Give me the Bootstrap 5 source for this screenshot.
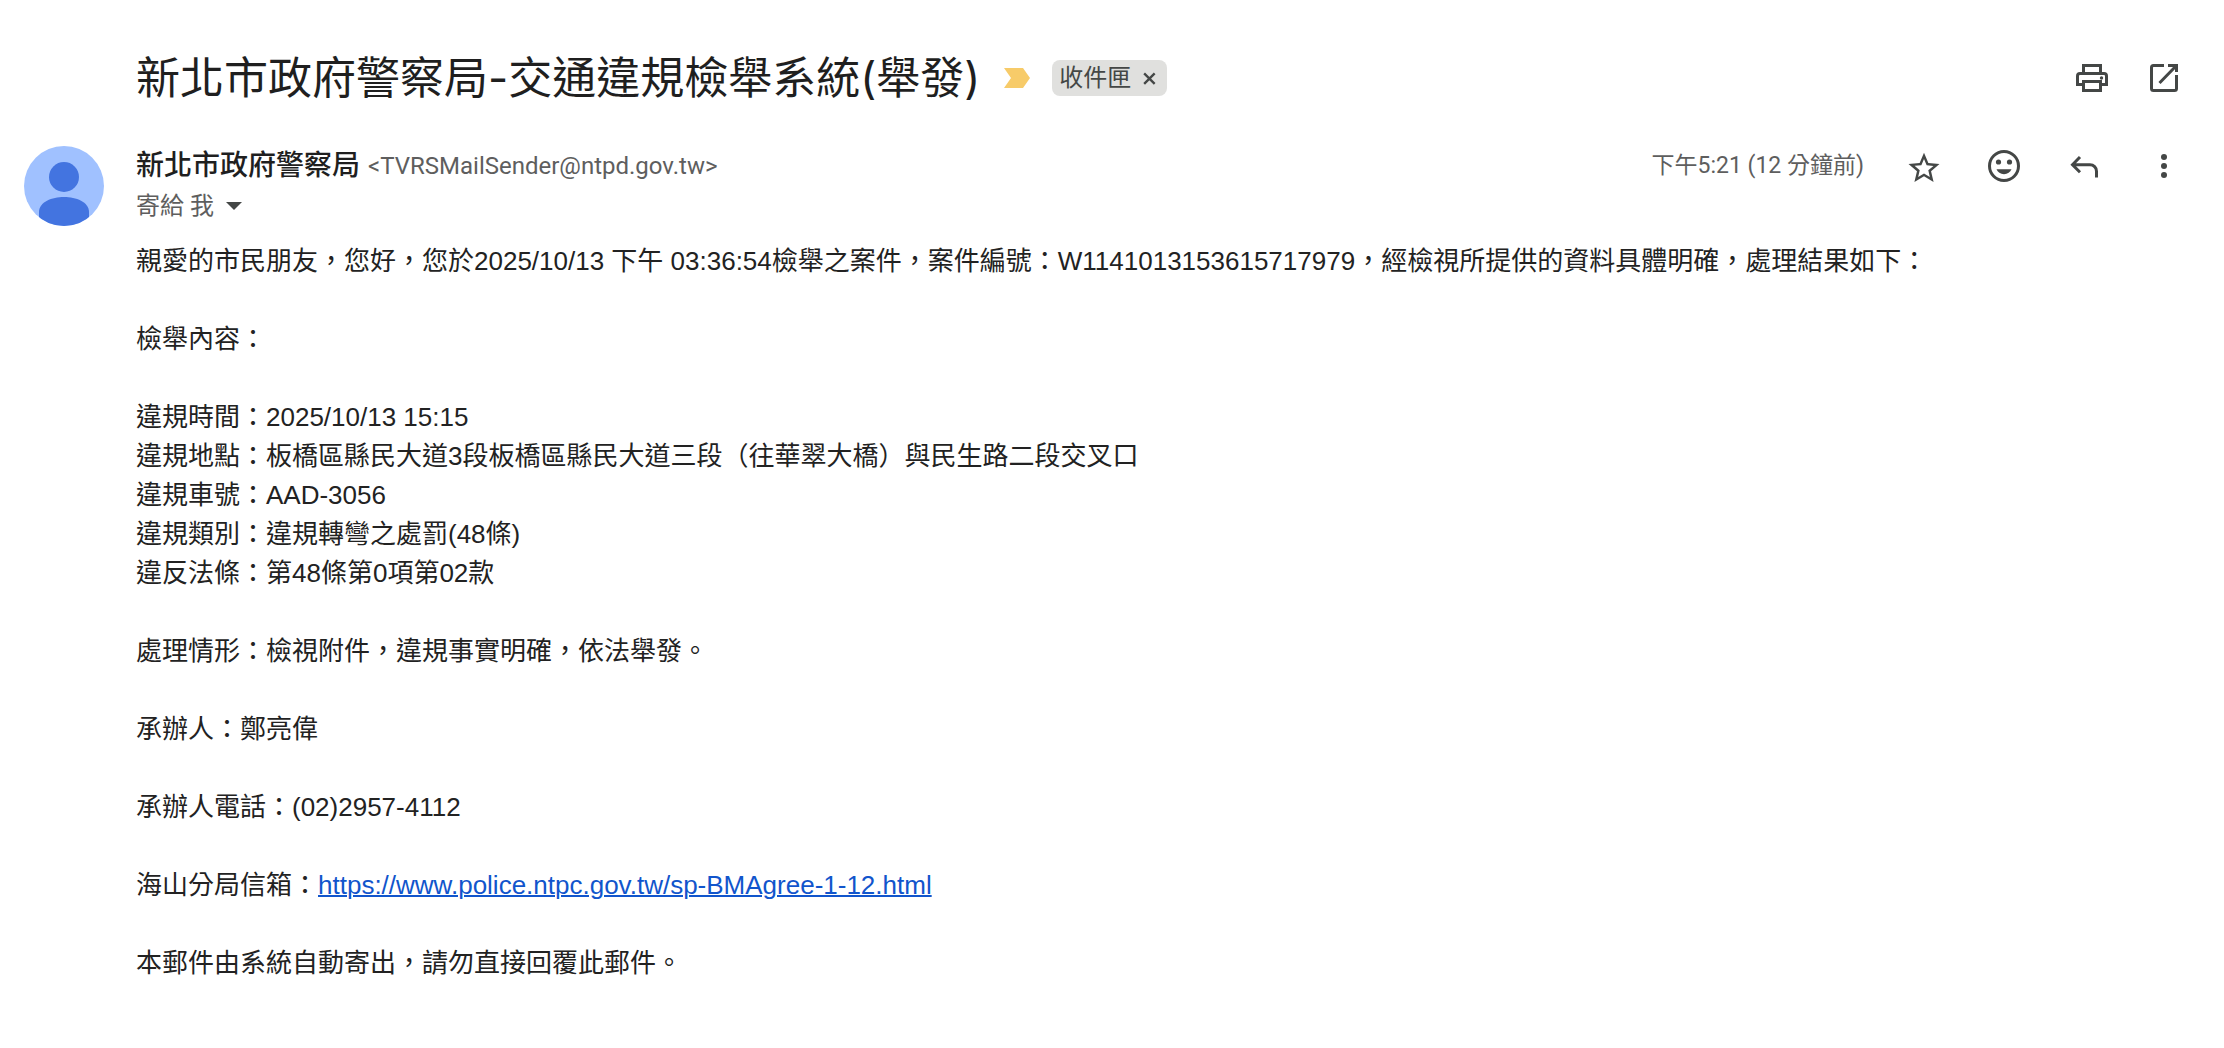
<!DOCTYPE html>
<html lang="zh-Hant">
<head>
<meta charset="utf-8">
<meta name="viewport" content="width=device-width, initial-scale=1">
<title>新北市政府警察局-交通違規檢舉系統(舉發)</title>
<link href="https://cdn.jsdelivr.net/npm/bootstrap@5.3.0/dist/css/bootstrap.min.css" rel="stylesheet">
<style>
body{font-family:Roboto,"Noto Sans CJK TC",sans-serif;color:#1f1f1f;background:#fff}
.mail-head{padding:48px 40px 0 136px}
.subject{font-family:Inter,"Noto Sans CJK TC",sans-serif;font-size:44px;line-height:60px;font-weight:400}
.importance{width:26px;height:20px;margin-left:24px}
.label-chip{height:36px;margin-left:22px;padding:0 10px 0 7px;gap:12px;border-radius:8px;background:#e0e0de;color:#444746;font-size:24px;line-height:36px}
.icon-btn{display:flex;padding:0;border:0;background:none;color:#444746}
.icon-btn svg{width:40px;height:40px;fill:none;stroke:currentColor;stroke-width:3}
.icon-btn svg.glyph-x{width:14px;height:14px;stroke-width:2}
.icon-btn .solid{fill:currentColor;stroke:none}
.head-tools{gap:32px}
.mail-meta{padding:38px 40px 0 24px;gap:32px}
.avatar{width:80px;height:80px}
.meta-row{height:40px}
.sender{font-size:28px;line-height:40px;font-weight:500}
.soft{color:#5e5e5e;font-size:24px;line-height:40px}
.sent-at{color:#5e5e5e;font-size:23px;line-height:40px}
.meta-tools{height:40px;gap:40px}
.to-btn{display:flex;align-items:center;gap:12px;padding:0;border:0;background:none}
.to-btn svg{width:16px;height:8px;fill:#444746}
.mail-body{padding:16px 40px 40px 136px;font-family:"Liberation Sans","Noto Sans CJK TC",sans-serif;font-size:26px;line-height:39px;color:#222}
.mail-body p{margin:0 0 39px}
.mail-body a{color:#15c;text-decoration-thickness:2px}
</style>
<script src="https://cdn.jsdelivr.net/npm/bootstrap@5.3.0/dist/js/bootstrap.bundle.min.js" defer></script>
</head>
<body>
<header class="mail-head d-flex align-items-center">
  <h1 class="subject m-0">新北市政府警察局-交通違規檢舉系統(舉發)</h1>
  <svg class="importance flex-shrink-0" viewBox="0 0 26 20" aria-hidden="true"><path d="M0 0h19l7 10-7 10H0l7-10z" fill="#f7cb69"/></svg>
  <div class="label-chip d-flex align-items-center flex-shrink-0"><span>收件匣</span>
    <button type="button" class="icon-btn" aria-label="移除標籤"><svg class="glyph-x" viewBox="0 0 12 12"><path d="M1 2l9 9M10 2L1 11"/></svg></button>
  </div>
  <div class="head-tools d-flex ms-auto">
    <button type="button" class="icon-btn" aria-label="列印"><svg viewBox="0 0 40 40"><path d="M11.500 14V7.500h17V14M10 26.500H5.500V18a2.500 2.500 0 0 1 2.500-2.500h24a2.500 2.500 0 0 1 2.500 2.500v8.500H30M11.500 23.500h17v9h-17z"/><circle class="solid" cx="29.500" cy="20" r="1.700"/></svg></button>
    <button type="button" class="icon-btn" aria-label="在新視窗開啟"><svg viewBox="0 0 40 40"><path d="M20 7.500H9.500a2 2 0 0 0-2 2v21a2 2 0 0 0 2 2h21a2 2 0 0 0 2-2V17M24 7.500h8.500V14M32 8L15.500 25"/></svg></button>
  </div>
</header>
<section class="mail-meta d-flex">
  <svg class="avatar flex-shrink-0" viewBox="0 0 80 80" aria-hidden="true">
    <clipPath id="disc"><circle cx="40" cy="40" r="40"/></clipPath>
    <g clip-path="url(#disc)"><path d="M0 0h80v80H0z" fill="#a0c1ff"/><circle cx="40" cy="31" r="15" fill="#4374e0"/><path d="M15 80V66c0-10 13-15 25-15s25 5 25 15v14z" fill="#4374e0"/></g>
  </svg>
  <div>
    <div class="meta-row d-flex align-items-center gap-2"><span class="sender">新北市政府警察局</span><span class="soft">&lt;TVRSMailSender@ntpd.gov.tw&gt;</span></div>
    <button type="button" class="to-btn soft">寄給 我 <svg viewBox="0 0 16 8" aria-hidden="true"><path d="M0 0h16L8 8z"/></svg></button>
  </div>
  <div class="meta-tools d-flex align-items-center ms-auto">
    <span class="sent-at">下午5:21 (12 分鐘前)</span>
    <button type="button" class="icon-btn" aria-label="加星號"><svg viewBox="-.9 -2.3 25.8 25.8"><path class="solid" d="M22 9.240l-7.190-.62L12 2 9.190 8.630 2 9.240l5.460 4.730L5.820 21 12 17.270 18.180 21l-1.630-7.030L22 9.240zM12 15.400l-3.760 2.270 1-4.280-3.320-2.880 4.380-.38L12 6.100l1.710 4.040 4.380.38-3.320 2.880 1 4.280L12 15.400z"/></svg></button>
    <button type="button" class="icon-btn" aria-label="新增回應"><svg viewBox="0 0 40 40"><circle cx="20" cy="20" r="14.500"/><g class="solid"><circle cx="14.500" cy="16" r="2.600"/><circle cx="25.500" cy="16" r="2.600"/><path d="M12.500 23.300h15c-1.200 3-4 4.900-7.500 4.900s-6.300-1.900-7.500-4.900z"/></g></svg></button>
    <button type="button" class="icon-btn" aria-label="回覆"><svg viewBox="0 0 40 40"><path d="M16 11l-7.500 7.700 7.500 7.500M8.500 18.700H26a6.500 6.500 0 0 1 6.500 6.500v6.300"/></svg></button>
    <button type="button" class="icon-btn" aria-label="更多"><svg viewBox="0 0 40 40"><g class="solid"><circle cx="20" cy="11" r="3"/><circle cx="20" cy="20" r="3"/><circle cx="20" cy="29" r="3"/></g></svg></button>
  </div>
</section>
<main class="mail-body">
  <p>親愛的市民朋友，您好，您於2025/10/13 下午 03:36:54檢舉之案件，案件編號：W1141013153615717979，經檢視所提供的資料具體明確，處理結果如下：</p>
  <p>檢舉內容：</p>
  <p>違規時間：2025/10/13 15:15<br>違規地點：板橋區縣民大道3段板橋區縣民大道三段（往華翠大橋）與民生路二段交叉口<br>違規車號：AAD-3056<br>違規類別：違規轉彎之處罰(48條)<br>違反法條：第48條第0項第02款</p>
  <p>處理情形：檢視附件，違規事實明確，依法舉發。</p>
  <p>承辦人：鄭亮偉</p>
  <p>承辦人電話：(02)2957-4112</p>
  <p>海山分局信箱：<a href="https://www.police.ntpc.gov.tw/sp-BMAgree-1-12.html">https://www.police.ntpc.gov.tw/sp-BMAgree-1-12.html</a></p>
  <p class="mb-0">本郵件由系統自動寄出，請勿直接回覆此郵件。</p>
</main>
</body>
</html>
